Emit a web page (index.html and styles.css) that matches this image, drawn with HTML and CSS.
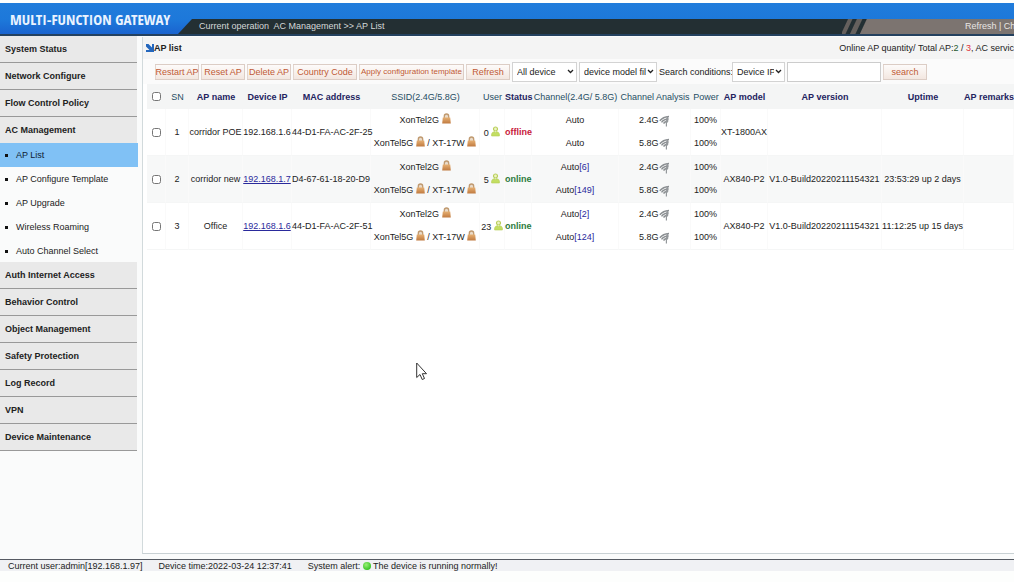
FILE: index.html
```html
<!DOCTYPE html>
<html lang="en">
<head>
<meta charset="utf-8">
<title>Multi-Function Gateway</title>
<link rel="stylesheet" href="styles.css">
</head>
<body>
<svg class="defs" aria-hidden="true">
  <defs>
    <linearGradient id="gold" x1="0" y1="0" x2="0" y2="1"><stop offset="0" stop-color="#e6b073"/><stop offset="1" stop-color="#c07a40"/></linearGradient>
    <radialGradient id="ball" cx=".4" cy=".35" r=".7"><stop offset="0" stop-color="#9af078"/><stop offset="1" stop-color="#2fc01d"/></radialGradient>
  </defs>
  <symbol id="lock" viewBox="0 0 9 11"><path d="M2.300 5.500V3.200a2.200 2.200 0 0 1 4.400 0v2.300" fill="#eadccb" stroke="#c09a70" stroke-width="1.300"/><path d="M.8 4.500h7.400L8.800 10.500H.2z" fill="url(#gold)"/></symbol>
  <symbol id="user" viewBox="0 0 9 11"><circle cx="4.500" cy="3" r="2" fill="#eef4c4" stroke="#b9cf5c" stroke-width="1.200"/><path d="M.6 10V8Q1 6 3.500 5.500l1 1.500 1-1.500Q8 6 8.400 8v2z" fill="#c3de62" stroke="#b3cc52" stroke-width=".6"/></symbol>
  <symbol id="wifi" viewBox="0 0 11 12"><path d="M.8 5.800Q4 1.800 10 1.500M2.500 7.300Q5 4 9.500 4M4.500 8.500Q6 6.300 8.500 6.500" fill="none" stroke="#8a8e91" stroke-width="1.400"/><path d="M7.500 1.500h1.800V6.500L8 8v3.500H6.800V8z" fill="#94989b"/></symbol>
</svg>

<header class="header">
  <h1 class="logo">MULTI-FUNCTION GATEWAY</h1>
  <div class="crumbs">
    <span class="path">Current operation&nbsp; AC Management &gt;&gt; AP List</span>
    <nav class="tools"><a href="#">Refresh</a> | <a href="#">Ch</a></nav>
  </div>
</header>

<div class="body">
  <nav class="side">
    <a class="group" href="#">System Status</a>
    <a class="group" href="#">Network Configure</a>
    <a class="group" href="#">Flow Control Policy</a>
    <a class="group" href="#">AC Management</a>
    <ul class="sub">
      <li class="active"><a href="#">AP List</a></li>
      <li><a href="#">AP Configure Template</a></li>
      <li><a href="#">AP Upgrade</a></li>
      <li><a href="#">Wireless Roaming</a></li>
      <li><a href="#">Auto Channel Select</a></li>
    </ul>
    <a class="group" href="#">Auth Internet Access</a>
    <a class="group" href="#">Behavior Control</a>
    <a class="group" href="#">Object Management</a>
    <a class="group" href="#">Safety Protection</a>
    <a class="group" href="#">Log Record</a>
    <a class="group" href="#">VPN</a>
    <a class="group" href="#">Device Maintenance</a>
  </nav>

  <main class="main">
    <div class="title">
      <h2><svg class="arrow" viewBox="0 0 8 8" aria-hidden="true"><path d="M0 0h2.500L6 3.500V0h2v8H0V6h3.500L0 2.500z" fill="#2467bd"/></svg>AP list</h2>
      <p class="count">Online AP quantity/ Total AP:<span class="on">2</span> / <span class="red">3</span>, AC servic</p>
    </div>
    <form class="bar">
      <button type="button" class="btn">Restart AP</button>
      <button type="button" class="btn">Reset AP</button>
      <button type="button" class="btn">Delete AP</button>
      <button type="button" class="btn mid">Country Code</button>
      <button type="button" class="btn wide">Apply configuration template</button>
      <button type="button" class="btn">Refresh</button>
      <select class="s-all" aria-label="Device status"><option>All device</option></select>
      <select class="s-model" aria-label="Device model"><option>device model filter</option></select>
      <label for="cond">Search conditions:</label>
      <select class="s-cond" id="cond"><option>Device IP</option></select>
      <input class="query" type="text" aria-label="Search text">
      <button type="button" class="btn">search</button>
    </form>
    <table class="list">
      <colgroup><col class="c19"><col class="c23"><col class="c54"><col class="c49"><col class="c79"><col class="c109"><col class="c25"><col class="c27"><col class="c87"><col class="c72"><col class="c30"><col class="c47"><col class="c114"><col class="c82"><col></colgroup>
      <thead>
        <tr><th><input type="checkbox" aria-label="Select all"></th><th class="teal">SN</th><th>AP name</th><th>Device IP</th><th>MAC address</th><th class="teal">SSID(2.4G/5.8G)</th><th class="teal">User</th><th>Status</th><th class="teal">Channel(2.4G/ 5.8G)</th><th class="teal">Channel Analysis</th><th class="teal">Power</th><th>AP model</th><th>AP version</th><th>Uptime</th><th>AP remarks</th></tr>
      </thead>
      <tbody>
        <tr>
          <td><input type="checkbox" aria-label="Select 1"></td><td>1</td><td>corridor POE</td><td>192.168.1.6</td><td>44-D1-FA-AC-2F-25</td>
          <td><div>XonTel2G <svg class="ico"><use href="#lock"/></svg></div><div>XonTel5G <svg class="ico"><use href="#lock"/></svg> / XT-17W <svg class="ico"><use href="#lock"/></svg></div></td>
          <td>0 <svg class="ico"><use href="#user"/></svg></td><td class="off">offline</td>
          <td><div>Auto</div><div>Auto</div></td>
          <td><div>2.4G <svg class="wifi"><use href="#wifi"/></svg></div><div>5.8G <svg class="wifi"><use href="#wifi"/></svg></div></td>
          <td><div>100%</div><div>100%</div></td><td>XT-1800AX</td><td></td><td></td><td></td>
        </tr>
        <tr>
          <td><input type="checkbox" aria-label="Select 2"></td><td>2</td><td>corridor new</td><td><a href="#">192.168.1.7</a></td><td>D4-67-61-18-20-D9</td>
          <td><div>XonTel2G <svg class="ico"><use href="#lock"/></svg></div><div>XonTel5G <svg class="ico"><use href="#lock"/></svg> / XT-17W <svg class="ico"><use href="#lock"/></svg></div></td>
          <td>5 <svg class="ico"><use href="#user"/></svg></td><td class="up">online</td>
          <td><div>Auto<span class="ch">[6]</span></div><div>Auto<span class="ch">[149]</span></div></td>
          <td><div>2.4G <svg class="wifi"><use href="#wifi"/></svg></div><div>5.8G <svg class="wifi"><use href="#wifi"/></svg></div></td>
          <td><div>100%</div><div>100%</div></td><td>AX840-P2</td><td>V1.0-Build20220211154321</td><td>23:53:29 up 2 days</td><td></td>
        </tr>
        <tr>
          <td><input type="checkbox" aria-label="Select 3"></td><td>3</td><td>Office</td><td><a href="#">192.168.1.6</a></td><td>44-D1-FA-AC-2F-51</td>
          <td><div>XonTel2G <svg class="ico"><use href="#lock"/></svg></div><div>XonTel5G <svg class="ico"><use href="#lock"/></svg> / XT-17W <svg class="ico"><use href="#lock"/></svg></div></td>
          <td>23 <svg class="ico"><use href="#user"/></svg></td><td class="up">online</td>
          <td><div>Auto<span class="ch">[2]</span></div><div>Auto<span class="ch">[124]</span></div></td>
          <td><div>2.4G <svg class="wifi"><use href="#wifi"/></svg></div><div>5.8G <svg class="wifi"><use href="#wifi"/></svg></div></td>
          <td><div>100%</div><div>100%</div></td><td>AX840-P2</td><td>V1.0-Build20220211154321</td><td>11:12:25 up 15 days</td><td></td>
        </tr>
      </tbody>
    </table>
  </main>
</div>

<footer class="footer">
  <span>Current user:admin[192.168.1.97]</span>
  <span>Device time:2022-03-24 12:37:41</span>
  <span>System alert: <svg class="ball" viewBox="0 0 8 8" aria-hidden="true"><circle cx="4" cy="4" r="4" fill="url(#ball)"/></svg> The device is running normally!</span>
</footer>

<svg class="cursor" viewBox="0 0 12 19" aria-hidden="true"><path d="M.7 1v14.500l3.300-3 2.200 5 2.300-1-2.200-4.800H10.500z" fill="#fff" stroke="#333" stroke-width="1"/></svg>
</body>
</html>
```

FILE: styles.css
```css
* { box-sizing: border-box; }
body {
  margin: 0;
  padding: 3px 0 11px;
  height: 100vh;
  display: flex;
  flex-direction: column;
  overflow: hidden;
  background: #fdfefd;
  color: #222;
  font: 9px/12px "Liberation Sans", Arial, sans-serif;
}
a { color: inherit; text-decoration: none; }
h1, h2, p, ul { margin: 0; padding: 0; }
.defs { position: absolute; width: 0; height: 0; }

.header {
  display: flex;
  align-items: flex-end;
  flex: none;
  height: 33px;
  background: linear-gradient(#207cdb, #1d78da 17px, #1a63cf);
  border-bottom: 2px solid #24415f;
}
.logo {
  align-self: center;
  width: 174px;
  padding-left: 10px;
  color: #eaf3ff;
  font: 300 15px/30px "Open Sans Condensed", "Roboto Condensed", "Liberation Sans Narrow", "Liberation Sans", sans-serif;
  white-space: nowrap;
}
.crumbs {
  flex: 1;
  display: flex;
  justify-content: space-between;
  height: 15px;
  margin-left: 4px;
  background: #232f33;
  clip-path: polygon(14px 0, 100% 0, 100% 100%, 0 100%);
  color: #d5d8d8;
  line-height: 15px;
}
.path { padding-left: 21px; }
.tools {
  width: 172px;
  padding-left: 123px;
  white-space: nowrap;
  color: #e8e6e4;
  background: linear-gradient(115deg, #232f33 5px, #65605d 6px 9px, #232f33 10px 13px, #65605d 14px 18px, #232f33 19px 22px, #7c7470 23px);
}

.body { flex: 1; display: flex; min-height: 0; background: #fafbfb; }
.side { width: 138px; flex: none; }
.group {
  display: block;
  height: 27px;
  margin-right: 1px;
  padding-left: 5px;
  background: #e9e9e9;
  border-bottom: 1px solid #999;
  font-weight: bold;
  line-height: 26px;
}
.sub { list-style: none; margin: -1px 0; }
.sub a { display: flex; align-items: center; height: 24px; padding-left: 5px; }
.sub a::before { content: ""; width: 3px; height: 3px; margin-right: 8px; background: #111; }
.active { background: #80c1f5; color: #123; }

.main {
  flex: 1;
  min-width: 0;
  margin: 1px 0 5px 4px;
  border-left: 1px solid #d2dadc;
  border-bottom: 1px solid #c9d1d4;
  background: #fff;
  overflow: hidden;
}
.title {
  display: flex;
  justify-content: space-between;
  align-items: center;
  height: 22px;
  padding-left: 3px;
  background: #f4f4f4;
}
.title h2 { font-size: 9px; display: flex; align-items: center; }
.arrow { width: 8px; height: 8px; }
.count { white-space: nowrap; }
.red { color: #e0323a; }
.on { color: #245a30; }

.bar {
  display: flex;
  align-items: center;
  gap: 2px;
  height: 25px;
  padding-left: 12px;
  background: #fbfbfb;
}
.btn, select, .query {
  flex: none;
  margin: 0;
  font: inherit;
}
.btn {
  width: 44px;
  height: 16px;
  padding: 0;
  white-space: nowrap;
  border: 1px solid #dccdc5;
  border-width: 1px 0;
  box-shadow: inset 1px 0 #e3d6cf, inset -1px 0 #dccdc5;
  background: linear-gradient(#fdfbfa, #f3e7e0);
  color: #c05a35;
}
.mid { width: 64px; }
.wide { width: 105px; font-size: 8px; }
select {
  height: 20px;
  padding: 0 10px 0 4px;
  appearance: none;
  border: 1px solid #d3d3d3;
  border-radius: 0;
  background: #fff url("data:image/svg+xml,%3Csvg xmlns='http://www.w3.org/2000/svg' width='7' height='5'%3E%3Cpath d='M1 1l2.500 2.500L6 1' fill='none' stroke='%23222' stroke-width='1.300'/%3E%3C/svg%3E") no-repeat right 2px center;
  color: #222;
}
.s-all { width: 65px; }
.s-model { width: 78px; }
.s-cond { width: 53px; }
.query { width: 94px; height: 20px; border: 1px solid #ccc; background: #fff; }
.bar label { flex: none; width: 71px; white-space: nowrap; }

.list { width: 100%; padding-left: 4px; border-spacing: 0; table-layout: fixed; }
.c19 { width: 19px; } .c23 { width: 23px; } .c25 { width: 25px; } .c27 { width: 27px; }
.c30 { width: 30px; } .c47 { width: 47px; } .c49 { width: 49px; } .c54 { width: 54px; }
.c72 { width: 72px; } .c79 { width: 79px; } .c82 { width: 82px; } .c87 { width: 87px; }
.c109 { width: 109px; } .c114 { width: 114px; }
th, td { padding: 0; text-align: center; white-space: nowrap; }
th { height: 25px; background: #f4f5f5; color: #23235f; }
.teal { color: #1f4d63; font-weight: normal; }
td { height: 47px; border-right: 1px solid #fafafa; border-bottom: 1px solid #f5f6f6; }
td div { height: 23px; line-height: 23px; }
tbody tr:nth-child(even) { background: #f7f8f8; }
.list input { display: block; width: 9px; height: 9px; margin: 0 auto; }
td a { color: #2a2a9c; text-decoration: underline; }
.ch { color: #2a2a9c; }
.off { color: #c8203c; font-weight: bold; }
.up { color: #2c7a3c; font-weight: bold; }
.ico { width: 9px; height: 11px; vertical-align: -1px; }
.wifi { width: 11px; height: 12px; vertical-align: -4px; margin-left: -2px; }

.footer {
  flex: none;
  display: flex;
  gap: 16px;
  height: 12px;
  padding-left: 8px;
  border-top: 1px solid #555a62;
  background: #f0f1f4;
}
.ball { width: 8px; height: 8px; vertical-align: -1px; }
.cursor { position: absolute; left: 416px; top: 362px; width: 12px; height: 19px; }
```
